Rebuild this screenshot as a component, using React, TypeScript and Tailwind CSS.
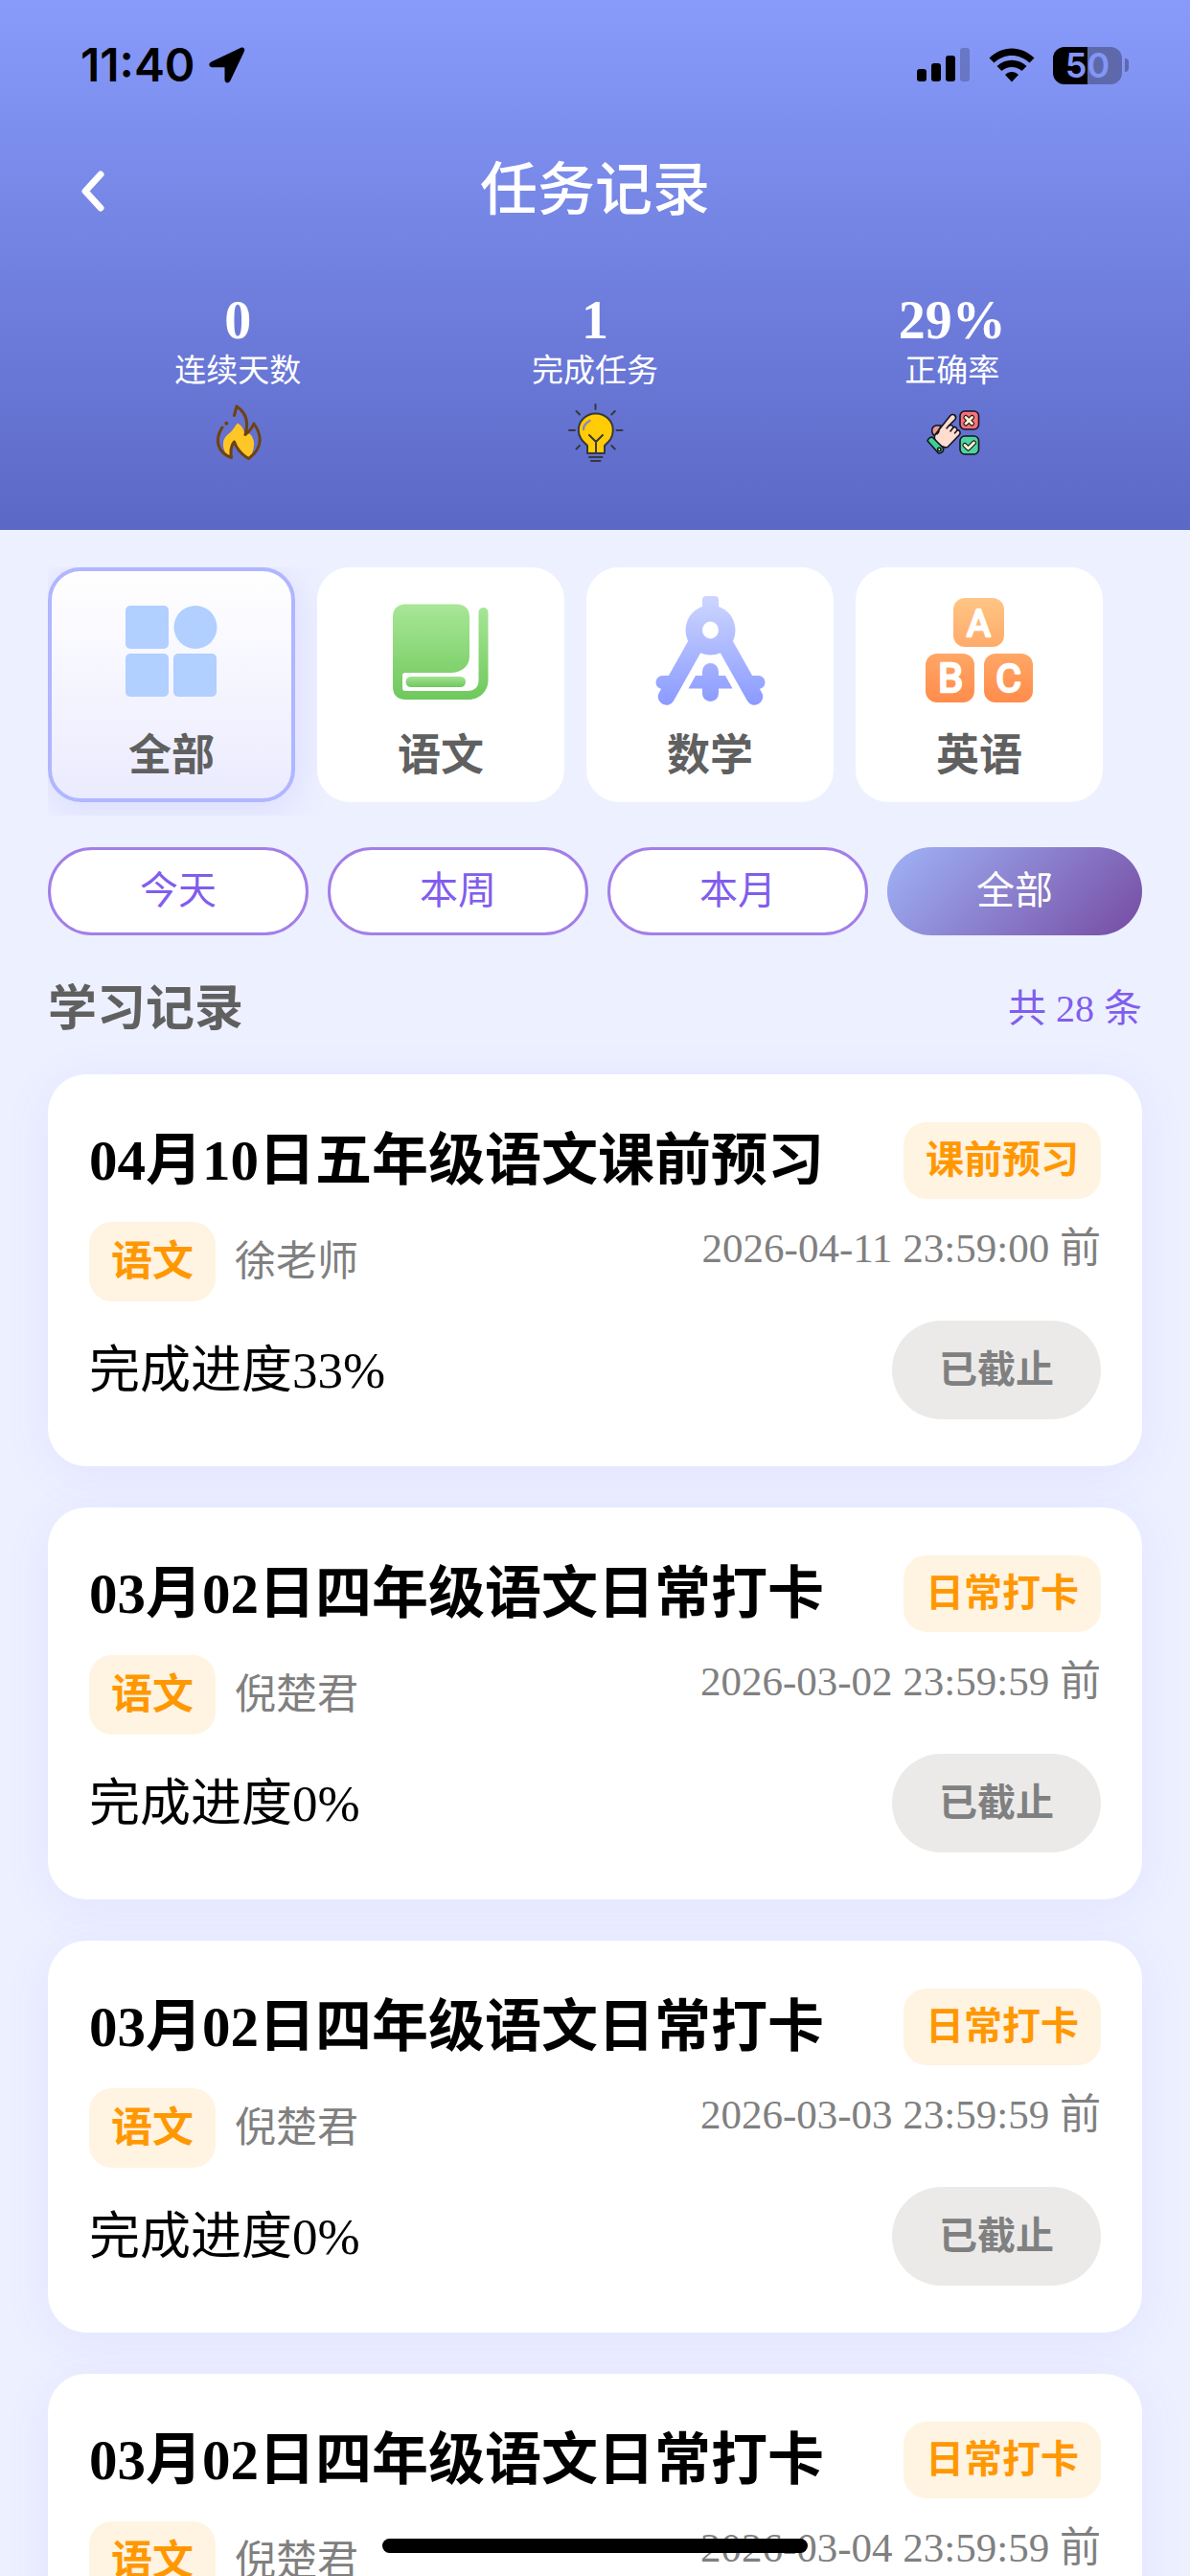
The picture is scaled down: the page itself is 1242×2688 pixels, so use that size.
import type { ReactNode } from 'react';

const subjects = [
  { name: '全部', icon: <GridIcon />, active: true },
  { name: '语文', icon: <BookIcon />, active: false },
  { name: '数学', icon: <CompassIcon />, active: false },
  { name: '英语', icon: <BlocksIcon />, active: false },
];

const ranges = [
  { name: '今天', active: false },
  { name: '本周', active: false },
  { name: '本月', active: false },
  { name: '全部', active: true },
];

const records = [
  {
    title: '04月10日五年级语文课前预习',
    type: '课前预习',
    subject: '语文',
    teacher: '徐老师',
    deadline: '2026-04-11 23:59:00 前',
    progress: 33,
  },
  {
    title: '03月02日四年级语文日常打卡',
    type: '日常打卡',
    subject: '语文',
    teacher: '倪楚君',
    deadline: '2026-03-02 23:59:59 前',
    progress: 0,
  },
  {
    title: '03月02日四年级语文日常打卡',
    type: '日常打卡',
    subject: '语文',
    teacher: '倪楚君',
    deadline: '2026-03-03 23:59:59 前',
    progress: 0,
  },
  {
    title: '03月02日四年级语文日常打卡',
    type: '日常打卡',
    subject: '语文',
    teacher: '倪楚君',
    deadline: '2026-03-04 23:59:59 前',
    progress: 0,
  },
];

function GridIcon() {
  return (
    <svg viewBox="0 0 116 116" className="size-[116px]" fill="#b1cfff" aria-hidden="true">
      <rect x="10" y="11" width="45" height="45" rx="5" />
      <circle cx="83" cy="33.5" r="22.5" />
      <rect x="10" y="61" width="45" height="45" rx="5" />
      <rect x="60" y="61" width="45" height="45" rx="5" />
    </svg>
  );
}

function BookIcon() {
  return (
    <svg viewBox="0 0 116 116" className="size-[116px]" aria-hidden="true">
      <defs>
        <linearGradient id="book" x1="0" y1="9" x2="0" y2="109" gradientUnits="userSpaceOnUse">
          <stop stopColor="#a8e797" />
          <stop offset="1" stopColor="#6fc85c" />
        </linearGradient>
        <linearGradient id="bookBar" x1="0" y1="0" x2="0" y2="1">
          <stop stopColor="#a2e391" />
          <stop offset="1" stopColor="#6fc85c" />
        </linearGradient>
      </defs>
      <path
        fill="url(#book)"
        d="M21 9.500H75c8 0 13 5 13 13V64c0 10-8 17-20 17H21c-2 0-3 1-3 3v13c0 2 1 3 3 3h65c7 0 11.500-4 11.500-11V18a5 5 0 0 1 10 0v71c0 11-9 20-20 20H21c-8 0-13-5-13-13V22.500c0-8 5-13 13-13z"
      />
      <rect x="21.500" y="85" width="62.500" height="11" rx="5.500" fill="url(#bookBar)" />
    </svg>
  );
}

function CompassIcon() {
  return (
    <svg viewBox="0 0 116 116" className="size-[116px]" aria-hidden="true">
      <defs>
        <linearGradient id="compass" x1="0" y1="1" x2="0" y2="115" gradientUnits="userSpaceOnUse">
          <stop stopColor="#cdd6ff" />
          <stop offset="1" stopColor="#8a9aff" />
        </linearGradient>
      </defs>
      <rect x="50" y="1" width="17" height="20" rx="4" fill="url(#compass)" />
      <path
        fill="none"
        stroke="url(#compass)"
        strokeWidth="17.400"
        strokeLinecap="round"
        d="M44 50 12.500 106M73 50l31.500 56"
      />
      <path
        fill="url(#compass)"
        fillRule="evenodd"
        d="M58.500 10.500a26 26 0 1 1 0 52a26 26 0 1 1 0-52zM58.500 27.500a8.500 9 0 1 0 0 18a8.500 9 0 1 0 0-18z"
      />
      <rect x="1.500" y="84" width="26" height="14" rx="7" fill="url(#compass)" />
      <rect x="89.500" y="84" width="26" height="14" rx="7" fill="url(#compass)" />
      <rect x="50" y="71" width="17" height="40" rx="8.500" fill="url(#compass)" />
      <path fill="url(#compass)" d="M43 84h31l7.500 13.500h-46z" />
    </svg>
  );
}

function BlocksIcon() {
  return (
    <svg viewBox="0 0 116 116" className="size-[116px]" aria-hidden="true">
      <defs>
        <linearGradient id="blocks" x1="0" y1="3" x2="0" y2="112" gradientUnits="userSpaceOnUse">
          <stop stopColor="#ffc585" />
          <stop offset="1" stopColor="#ff8c4b" />
        </linearGradient>
      </defs>
      <g fill="url(#blocks)">
        <rect x="31" y="3" width="53" height="51" rx="12" />
        <rect x="2" y="61" width="51" height="51" rx="12" />
        <rect x="63" y="61" width="51" height="51" rx="12" />
      </g>
      <g
        fill="white"
        stroke="white"
        strokeWidth="2.500"
        strokeLinejoin="round"
        textAnchor="middle"
        fontFamily="Roboto, sans-serif"
        fontWeight="400"
      >
        <text x="57.500" y="42.500" fontSize="38">A</text>
        <text x="28" y="101" fontSize="42">B</text>
        <text x="88.500" y="101" fontSize="41">C</text>
      </g>
    </svg>
  );
}

function FlameIcon() {
  return (
    <svg viewBox="0 0 66 66" className="size-[66px]" fill="none" aria-hidden="true">
      <path
        fill="#ffc726"
        d="M33 22.500c4 2 6.500 6 7.500 12l5-1c3.500 3.500 5 7.500 4.500 12.500c-.5 6-2.500 10-5.500 13.500c-8-4-12-10-14.500-18c-4 5-4.500 11-4.500 16c-5-2-7.500-7-7.500-12.500c0-7 3-9 6.500-12c4-3.500 5-6.500 8.500-10.500z"
      />
      <path
        stroke="#6f420f"
        strokeWidth="3"
        strokeLinecap="round"
        strokeLinejoin="round"
        d="M29.500 14.500 32 5c9 6 13 16 9 29.500c4-3 7-7 9-11.500c9 13 9 26-5.500 36.500c-7-4-12-9-15-17.500c-4 5-4 11-3 16.500C13 54 8 41 17 27"
      />
      <circle cx="21.400" cy="22.700" r="2" fill="#6f420f" />
    </svg>
  );
}

function BulbIcon() {
  return (
    <svg viewBox="0 0 66 66" className="size-[66px]" fill="none" strokeLinecap="round" aria-hidden="true">
      <path
        fill="#ffcc05"
        stroke="#34393f"
        strokeWidth="2"
        strokeLinejoin="round"
        d="M33.800 12.500c-10 0-18 7.500-18 17.500c0 8 5 12 9.200 16v8h18v-8c4.200-4 8.800-8 8.800-16c0-10-8-17.500-18-17.500z"
      />
      <path
        stroke="#34393f"
        strokeWidth="2"
        d="M27 35l7 7l7-7M34 42v12M27 58h13.500M29 62h9.500M33.500 3v5M6 30h6M55.500 30h6M13.500 10l3.500 3.500M53.800 10l-3.500 3.500M13.500 49.500 17 46M53.800 49.500 50.300 46"
      />
      <path stroke="#8c87b8" strokeWidth="2.500" d="M21 29c0-4 3-7 6.500-9" />
    </svg>
  );
}

function HandIcon() {
  return (
    <svg
      viewBox="0 0 66 66"
      className="size-[66px]"
      stroke="#15151b"
      strokeWidth="1.600"
      strokeLinecap="round"
      strokeLinejoin="round"
      aria-hidden="true"
    >
      <path fill="#e79a93" d="M15 36c-5-3-4-10 1-11l5 0l-3 9z" />
      <path
        fill="#ffdcd0"
        d="M31 14.500c3-2.500 7 .5 5 4L29.500 25c2-1 4 0 4.500 2c2-1 4 .5 4 3c2.500-.5 4 2 2.500 4.500L28 47.500c-3 1-6 0-9-3c-4-4-6-6-4-10z"
      />
      <path fill="none" d="M29.500 25 27 28M34 27l-3 4M38 30l-2.500 3M15.500 34c2 0 3.500-2 3.500-5" />
      <path fill="#3ecf98" d="M7 41c1-3 4-5 6-3l10 10c2 3-1 6.500-4.500 6z" />
      <circle cx="19.300" cy="50" r="1.700" fill="#ffdcd0" />
      <rect x="41" y="10" width="19.500" height="19" rx="5" fill="#f9707d" />
      <rect x="41" y="36" width="19.500" height="19" rx="5" fill="#4fd3a0" />
      <path fill="none" strokeWidth="5" d="M47 16.500l6.500 6.500M53.500 16.500 47 23M46 45.500l3.500 3.500l6-6" />
      <path fill="none" stroke="#fff5cf" strokeWidth="2.800" d="M47 16.500l6.500 6.500M53.500 16.500 47 23M46 45.500l3.500 3.500l6-6" />
    </svg>
  );
}

function StatusBar() {
  return (
    <div className="flex h-[136px] items-center justify-between pr-16 pl-[84px]">
      <div className="flex items-center gap-3.5 font-['Inter',sans-serif] text-[48px] leading-none font-semibold text-black">
        <span>11:40</span>
        <svg viewBox="0 0 38 38" className="size-[38px]" aria-hidden="true">
          <path
            d="M33.500.8 2.500 15.500C-.8 17.200-.2 21.200 3.500 21.200H16.500V34c0 4 4.500 4.500 6 1L37 4.500C38 1.800 36-.4 33.500.8z"
            fill="black"
          />
        </svg>
      </div>
      <div className="flex items-center gap-[19px]">
        <svg viewBox="0 0 56 36" className="h-9 w-14" aria-hidden="true">
          <rect x="0" y="22" width="10" height="13" rx="3" />
          <rect x="15" y="16" width="10" height="19" rx="3" />
          <rect x="30" y="8" width="10" height="27" rx="3" />
          <rect x="45" y="0" width="10" height="35" rx="3" fillOpacity="0.2" />
        </svg>
        <svg viewBox="0 0 48 36" className="h-9 w-12" aria-hidden="true">
          <path d="M.5 10.500C14-3 34-3 47.500 10.500L42.500 15.500C32 5.500 16 5.500 5.500 15.500z" />
          <path d="M8.500 19C17.500 10.500 30.500 10.500 39.500 19L34.500 24C28.500 18.500 19.500 18.500 13.500 24z" />
          <path d="M17 28C21 24 27 24 31 28L24 35.500z" />
        </svg>
        <div className="flex items-center gap-[3px]">
          <div className="flex h-[39px] w-[72px] items-center justify-center rounded-xl bg-[linear-gradient(to_right,#000_50%,#5d69ab_50%)] font-['Inter',sans-serif] text-[36px] leading-none font-semibold text-[#8396f6]">
            50
          </div>
          <div className="h-3.5 w-1 rounded-r-full bg-[#5d69ab]" />
        </div>
      </div>
    </div>
  );
}

function Stat({ value, label, icon }: { value: string; label: string; icon: ReactNode }) {
  return (
    <div className="flex flex-col items-center">
      <span className="text-[56px] leading-[60px] font-bold">{value}</span>
      <span className="text-[33px] leading-[46px]">{label}</span>
      <div className="mt-[9px]">{icon}</div>
    </div>
  );
}

function RecordCard({ record }: { record: (typeof records)[number] }) {
  return (
    <article className="rounded-[40px] bg-white px-[43px] pt-[50px] pb-[49px] shadow-[0_8px_50px_rgba(108,108,255,0.08)]">
      <div className="flex items-center justify-between">
        <h3 className="text-[59px] leading-[80px] font-bold text-black">{record.title}</h3>
        <span className="rounded-3xl bg-[#fff3e2] px-[23px] text-[40px] leading-[80px] font-bold text-[#ff9800]">
          {record.type}
        </span>
      </div>
      <div className="mt-6 flex items-start justify-between text-[43px] text-[#808080]">
        <div className="flex items-center gap-5 leading-[83px]">
          <span className="rounded-3xl bg-[#fff3e2] px-[23px] font-bold text-[#ff9800]">{record.subject}</span>
          <span>{record.teacher}</span>
        </div>
        <time className="leading-[56px]">{record.deadline}</time>
      </div>
      <div className="mt-5 flex items-center justify-between">
        <p className="text-[53px] leading-[80px] text-black">完成进度{record.progress}%</p>
        <button
          type="button"
          className="rounded-full bg-[#ebeae9] px-[49px] text-[40px] leading-[103px] font-bold text-[#808080]"
        >
          已截止
        </button>
      </div>
    </article>
  );
}

export default function App() {
  return (
    <div className="relative h-screen overflow-hidden bg-[#edf0ff] font-['Liberation_Serif','Noto_Sans_CJK_SC',sans-serif]">
      <header className="bg-linear-to-b from-[#889bfb] to-[#5c68c6] pb-[68px] text-white">
        <StatusBar />
        <div className="grid h-[126px] grid-cols-3 items-center px-[84px]">
          <button type="button" aria-label="返回" className="justify-self-start">
            <svg viewBox="0 0 26 44" className="h-11 w-[26px]" aria-hidden="true">
              <path
                d="M21 5 5 22.500 21 40"
                fill="none"
                stroke="currentColor"
                strokeWidth="7"
                strokeLinecap="round"
                strokeLinejoin="round"
              />
            </svg>
          </button>
          <h1 className="justify-self-center text-[60px] leading-[80px] font-medium">任务记录</h1>
        </div>
        <div className="mt-[42px] grid grid-cols-3 px-[62px]">
          <Stat value="0" label="连续天数" icon={<FlameIcon />} />
          <Stat value="1" label="完成任务" icon={<BulbIcon />} />
          <Stat value="29%" label="正确率" icon={<HandIcon />} />
        </div>
      </header>

      <main className="px-[50px] pt-[39px]">
        <nav className="flex gap-[23px] overflow-hidden pb-3.5">
          {subjects.map((s) => (
            <button
              key={s.name}
              type="button"
              className={`flex h-[245px] w-[258px] shrink-0 flex-col items-center rounded-[34px] border-4 pt-[25px] text-[45px] leading-[64px] font-bold text-[#606060] ${
                s.active
                  ? 'border-[#b0b6ff] bg-linear-to-b from-white to-[#ebebff] shadow-[0_8px_40px_rgba(108,99,255,0.15)]'
                  : 'relative border-white bg-white'
              }`}
            >
              {s.icon}
              <span className="mt-5">{s.name}</span>
            </button>
          ))}
        </nav>

        <div className="mt-[33px] flex gap-5">
          {ranges.map((r) => (
            <button
              key={r.name}
              type="button"
              className={`h-[92px] flex-1 rounded-full text-[40px] leading-[60px] ${
                r.active
                  ? 'bg-linear-[135deg,#9fb4f7,#764ba2] text-white'
                  : 'border-3 border-[#a37ee8] bg-white text-[#815ded]'
              }`}
            >
              {r.name}
            </button>
          ))}
        </div>

        <div className="mt-[42px] flex items-center justify-between leading-[70px]">
          <h2 className="text-[51px] font-bold text-[#606060]">学习记录</h2>
          <span className="text-[40px] text-[#815ded]">共 28 条</span>
        </div>

        <div className="mt-[33px] flex flex-col gap-[43px]">
          {records.map((record) => (
            <RecordCard key={record.deadline} record={record} />
          ))}
        </div>
      </main>

      <div className="absolute bottom-6 left-1/2 h-[15px] w-[444px] -translate-x-1/2 rounded-full bg-black" />
    </div>
  );
}
